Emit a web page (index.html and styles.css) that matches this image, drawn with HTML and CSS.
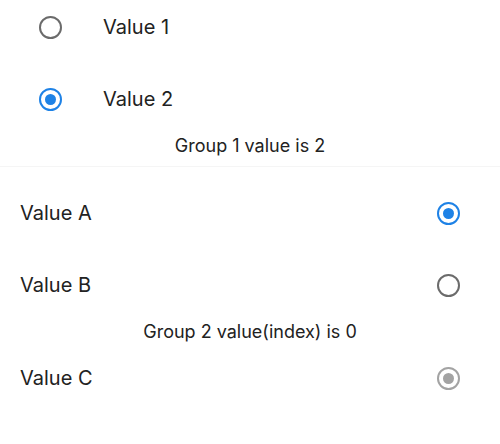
FILE: index.html
```html
<!DOCTYPE html>
<html>
<head>
<meta charset="utf-8">
<link rel="stylesheet" href="styles.css">
</head>
<body>
<section class="group group-one">
  <div class="row">
    <span class="radio"></span>
    <span class="label">Value 1</span>
  </div>
  <div class="row">
    <span class="radio checked"></span>
    <span class="label">Value 2</span>
  </div>
  <p class="caption">Group 1 value is 2</p>
</section>
<section class="group group-two">
  <div class="row">
    <span class="label">Value A</span>
    <span class="radio checked"></span>
  </div>
  <div class="row">
    <span class="label">Value B</span>
    <span class="radio"></span>
  </div>
  <p class="caption">Group 2 value(index) is 0</p>
  <div class="row row-last">
    <span class="label">Value C</span>
    <span class="radio checked disabled"></span>
  </div>
</section>
</body>
</html>
```
FILE: styles.css
```css
* { box-sizing: border-box; }
html, body {
  margin: 0;
  padding: 0;
  background: #fff;
  font-family: Inter, "Noto Sans", sans-serif;
  color: #222;
}
.group {
  display: flex;
  flex-direction: column;
}
.group-one {
  padding-bottom: 10px;
  border-bottom: 1px solid #f5f5f5;
}
.group-two {
  padding-top: 19px;
}
.row {
  height: 54px;
  display: flex;
  align-items: center;
}
.row + .row { margin-top: 18px; }
.row-last { margin-top: 9px; }
.group-one .row { padding-left: 39px; gap: 41px; }
.group-two .row { padding: 0 40px 0 20px; justify-content: space-between; }
.label {
  font-size: 20px;
  line-height: 24px;
}
.caption {
  margin: 10px 0 0;
  text-align: center;
  font-size: 18px;
  line-height: 20px;
}
.radio {
  width: 23px;
  height: 23px;
  border-radius: 50%;
  border: 2px solid #6b6b6b;
  display: flex;
  align-items: center;
  justify-content: center;
  flex-shrink: 0;
}
.radio.checked { border-color: #1e82e6; }
.radio.checked::after {
  content: "";
  width: 11px;
  height: 11px;
  border-radius: 50%;
  background: #1e82e6;
}
.radio.disabled { border-color: #a3a3a3; }
.radio.disabled::after { background: #a3a3a3; }
```
